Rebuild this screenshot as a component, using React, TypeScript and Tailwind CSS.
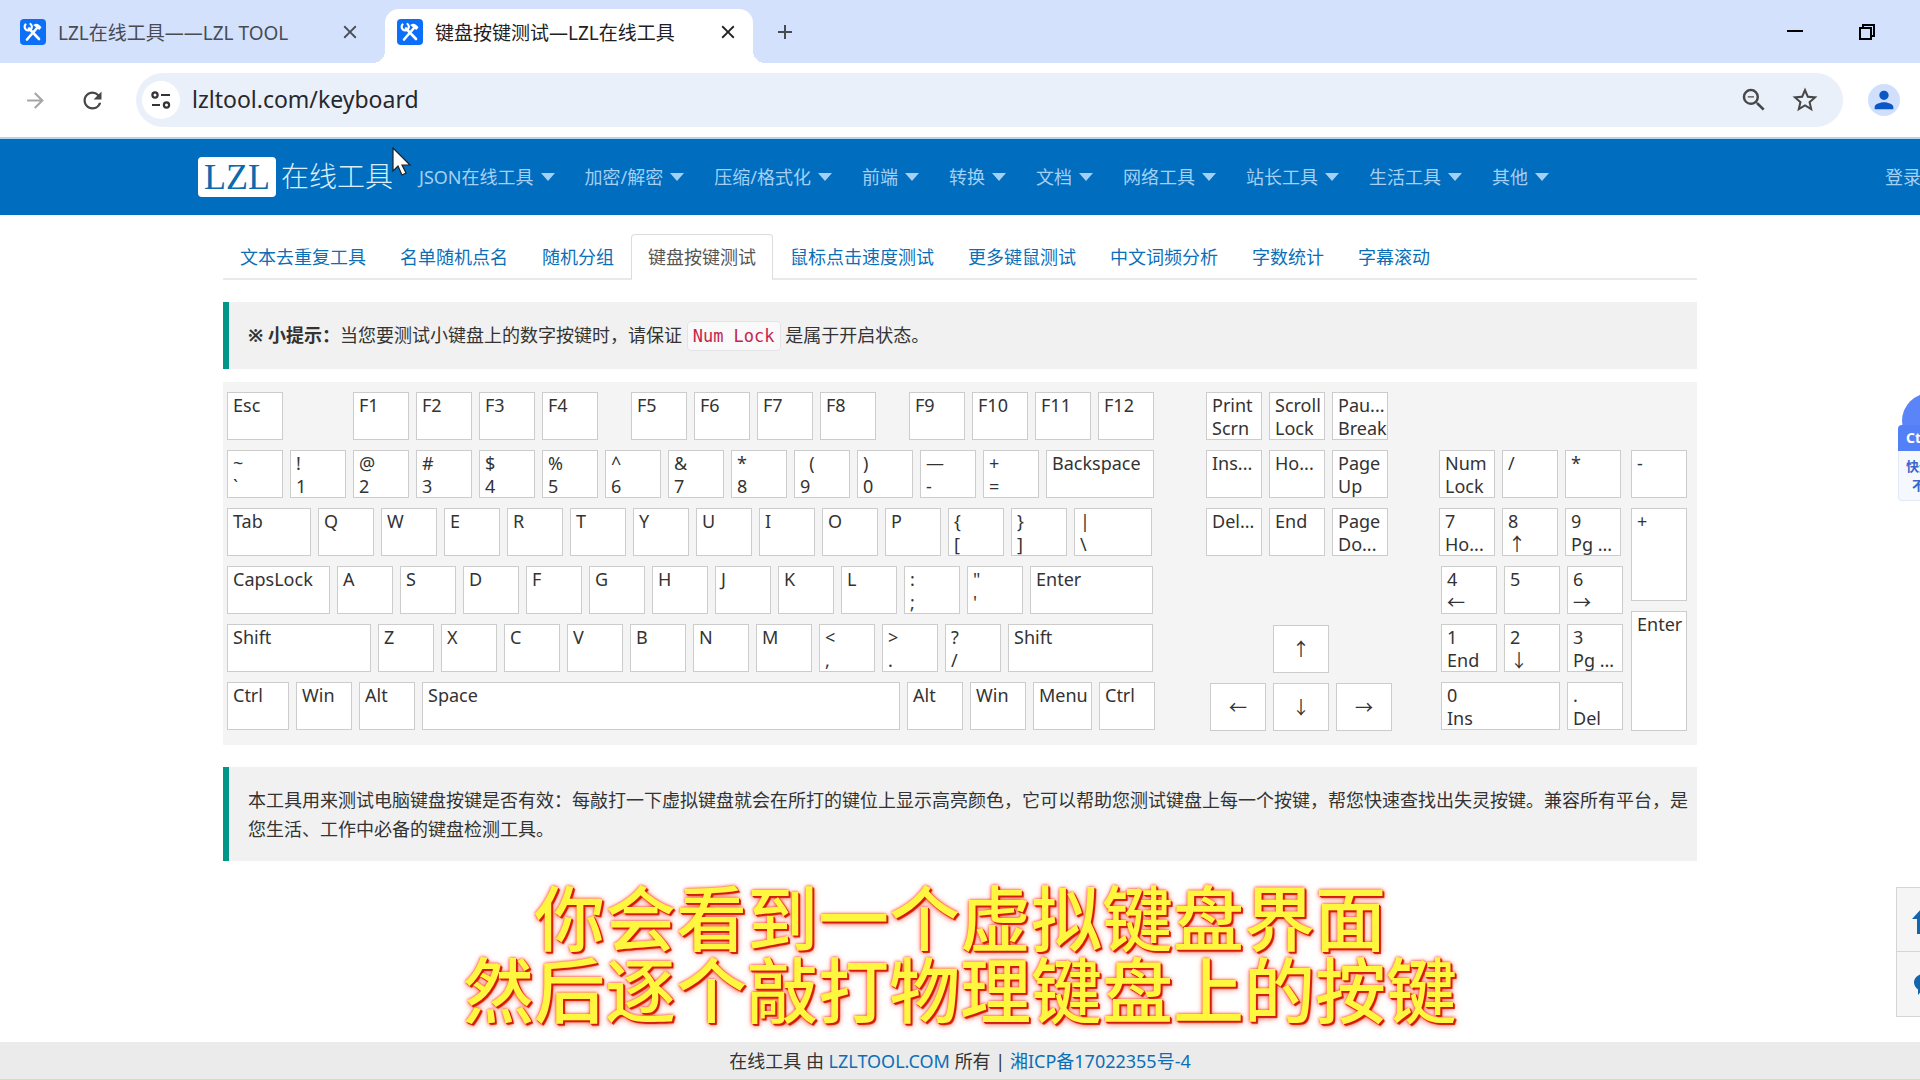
import type { ReactNode } from 'react';
import {
  MdAdd,
  MdArrowForward,
  MdClose,
  MdPerson,
  MdRefresh,
  MdStarOutline,
  MdZoomOut,
} from 'react-icons/md';

type KeyDef = [label: string, width?: string];

const menus = ['JSON在线工具', '加密/解密', '压缩/格式化', '前端', '转换', '文档', '网络工具', '站长工具', '生活工具', '其他'];

const tools = [
  '文本去重复工具',
  '名单随机点名',
  '随机分组',
  '键盘按键测试',
  '鼠标点击速度测试',
  '更多键鼠测试',
  '中文词频分析',
  '字数统计',
  '字幕滚动',
];

const functionKeys = [
  ['F1', 'F2', 'F3', 'F4'],
  ['F5', 'F6', 'F7', 'F8'],
  ['F9', 'F10', 'F11', 'F12'],
];

const mainRows: KeyDef[][] = [
  [
    ['~\n`'], ['!\n1'], ['@\n2'], ['#\n3'], ['$\n4'], ['%\n5'], ['^\n6'], ['&\n7'], ['*\n8'],
    ['  (\n9'], [')\n0'], ['—\n-'], ['+\n='], ['Backspace', 'w-[108px]'],
  ],
  [
    ['Tab', 'w-[84px]'], ['Q'], ['W'], ['E'], ['R'], ['T'], ['Y'], ['U'], ['I'], ['O'], ['P'],
    ['{\n['], ['}\n]'], ['|\n\\', 'w-[78px]'],
  ],
  [
    ['CapsLock', 'w-[103px]'], ['A'], ['S'], ['D'], ['F'], ['G'], ['H'], ['J'], ['K'], ['L'],
    [':\n;'], ['"\n\''], ['Enter', 'w-[123px]'],
  ],
  [
    ['Shift', 'w-36'], ['Z'], ['X'], ['C'], ['V'], ['B'], ['N'], ['M'],
    ['<\n,'], ['>\n.'], ['?\n/'], ['Shift', 'w-[145px]'],
  ],
  [
    ['Ctrl', 'w-[62px]'], ['Win'], ['Alt'], ['Space', 'w-[478px]'],
    ['Alt'], ['Win'], ['Menu', 'w-[59px]'], ['Ctrl'],
  ],
];

const navRows = [
  ['Print\nScrn', 'Scroll\nLock', 'Pau...\nBreak'],
  ['Ins...', 'Ho...', 'Page\nUp'],
  ['Del...', 'End', 'Page\nDo...'],
];

const padTop = [
  ['Num\nLock', '/', '*'],
  ['7\nHo...', '8\n↑', '9\nPg ...'],
];

const padMiddle = [
  ['4\n←', '5', '6\n→'],
  ['1\nEnd', '2\n↓', '3\nPg ...'],
];

function Key({ label, size = 'h-12 w-14', centered = false }: { label: string; size?: string; centered?: boolean }) {
  return (
    <button
      type="button"
      className={`flex shrink-0 overflow-hidden whitespace-pre border border-[#ccc] bg-white text-left text-lg leading-[23px] text-[#333] ${
        centered ? 'items-center justify-center' : 'items-start pl-[5px] pt-px'
      } ${size}`}
    >
      {label}
    </button>
  );
}

function Row({ children }: { children: ReactNode }) {
  return <div className="flex gap-[7px]">{children}</div>;
}

function KeyGrid({ rows }: { rows: string[][] }) {
  return (
    <div className="flex flex-col gap-[10px]">
      {rows.map((row, i) => (
        <Row key={i}>
          {row.map((label) => (
            <Key key={label} label={label} />
          ))}
        </Row>
      ))}
    </div>
  );
}

function Favicon() {
  return (
    <svg viewBox="0 0 26 26" className="size-[26px] shrink-0" fill="none">
      <rect width="26" height="26" rx="4" fill="#0b70f7" />
      <path d="M9 9.500l10 10.500" stroke="#fff" strokeWidth="2.600" strokeLinecap="round" />
      <path d="M5.500 5.500a3.600 3.600 0 1 0 5-.5" stroke="#fff" strokeWidth="2.200" strokeLinecap="round" />
      <path d="M7 20.500L17 9" stroke="#fff" strokeWidth="2.600" strokeLinecap="round" />
      <path d="M14 5.500c2.500-1.500 5-.5 7.500 3l-2.300 2.500-6-5z" fill="#fff" />
    </svg>
  );
}

function Browser() {
  return (
    <div>
      <div className="flex h-[63px] bg-[#d3e1fd] pt-[9px] text-[19px] text-[#474b52]">
        <div className="flex w-[385px] items-center pb-2 pl-5 pr-6">
          <Favicon />
          <span className="ml-3 flex-1 whitespace-nowrap pt-[3px]">LZL在线工具——LZL TOOL</span>
          <button type="button" aria-label="关闭">
            <MdClose className="size-[22px]" />
          </button>
        </div>
        <div className="relative flex w-[368px] items-center rounded-t-[14px] bg-white pb-2 pl-3 pr-[14px] text-[#1f2023]">
          <span className="absolute -left-3 bottom-0 size-3 bg-[radial-gradient(circle_at_0_0,transparent_12px,white_12px)]" />
          <span className="absolute -right-3 bottom-0 size-3 bg-[radial-gradient(circle_at_100%_0,transparent_12px,white_12px)]" />
          <Favicon />
          <span className="ml-3 flex-1 whitespace-nowrap pt-[3px]">键盘按键测试—LZL在线工具</span>
          <button type="button" aria-label="关闭">
            <MdClose className="size-[22px]" />
          </button>
        </div>
        <button type="button" aria-label="新标签页" className="ml-5 pb-2">
          <MdAdd className="size-6" />
        </button>
        <div className="ml-auto flex gap-14 pb-2 pr-[45px] text-black">
          <button type="button" aria-label="最小化">
            <svg viewBox="0 0 16 16" className="size-4">
              <path d="M0 7h16" stroke="currentColor" strokeWidth="2" />
            </svg>
          </button>
          <button type="button" aria-label="还原">
            <svg viewBox="0 0 16 16" className="size-4" fill="none" stroke="currentColor" strokeWidth="2">
              <path d="M1 4h11v11H1z" />
              <path d="M4 4V1h11v11h-3" />
            </svg>
          </button>
        </div>
      </div>

      <div className="flex h-[76px] items-center border-b-2 border-[#b4d5ee] bg-white text-[#474747]">
        <button type="button" aria-label="前进" className="ml-[23px] text-[#a5a5a5]">
          <MdArrowForward className="size-[25px]" />
        </button>
        <button type="button" aria-label="刷新" className="ml-[31px]">
          <MdRefresh className="size-[27px]" />
        </button>
        <div className="ml-[30px] flex h-[54px] flex-1 items-center rounded-full bg-[#eaf0f9] pl-[6px] pr-[23px]">
          <span className="flex size-[38px] items-center justify-center rounded-full bg-white">
            <svg viewBox="0 0 20 20" className="size-5" fill="none" stroke="#333" strokeWidth="2.2">
              <circle cx="4" cy="5" r="2.6" />
              <path d="M10 5h9M1 15h8" />
              <circle cx="15.5" cy="15" r="2.6" />
            </svg>
          </span>
          <input
            aria-label="地址栏"
            defaultValue="lzltool.com/keyboard"
            className="ml-3 min-w-0 flex-1 bg-transparent text-[23px] text-[#26282b] outline-none"
          />
          <button type="button" aria-label="缩小">
            <MdZoomOut className="size-[30px]" />
          </button>
          <button type="button" aria-label="收藏" className="ml-[21px]">
            <MdStarOutline className="size-[30px]" />
          </button>
        </div>
        <button
          type="button"
          aria-label="账户"
          className="ml-[25px] mr-5 flex size-8 items-center justify-center rounded-full bg-[#d0e0fc] text-[#0b57c6]"
        >
          <MdPerson className="size-[28px]" />
        </button>
      </div>
    </div>
  );
}

function SiteHeader() {
  return (
    <header className="flex h-[76px] items-center overflow-hidden bg-[#006dbf] pl-[198px] text-lg text-[#a3d0f4]">
      <a href="#" className="flex items-center">
        <span className="flex h-10 w-[78px] items-center justify-center rounded-sm bg-white font-['Liberation_Serif',serif] text-4xl text-[#0a6aae]">
          LZL
        </span>
        <span className="ml-[5px] text-[28px] font-light text-[#dcedfa]">在线工具</span>
      </a>
      <nav className="ml-[26px] flex gap-[30px]">
        {menus.map((menu) => (
          <a key={menu} href="#" className="flex items-center whitespace-nowrap">
            {menu}
            <svg viewBox="0 0 14 8" className="ml-[7px] h-2 w-[14px]">
              <path d="M0 0h14L7 8z" fill="currentColor" />
            </svg>
          </a>
        ))}
      </nav>
      <a href="#" className="ml-auto w-[35px] whitespace-nowrap">
        登录
      </a>
    </header>
  );
}

function Keyboard() {
  return (
    <section className="mt-[13px] flex bg-[#f4f4f4] px-1 pb-[14px] pt-[10px]">
      <div className="flex flex-col gap-[10px]">
        <div className="flex">
          <Key label="Esc" />
          <div className="ml-[70px] flex gap-[33px]">
            {functionKeys.map((group) => (
              <Row key={group[0]}>
                {group.map((label) => (
                  <Key key={label} label={label} />
                ))}
              </Row>
            ))}
          </div>
        </div>
        {mainRows.map((row, i) => (
          <Row key={i}>
            {row.map(([label, width = 'w-14'], j) => (
              <Key key={j} label={label} size={`h-12 ${width}`} />
            ))}
          </Row>
        ))}
      </div>

      <div className="ml-[51px] flex flex-col justify-between">
        <KeyGrid rows={navRows} />
        <div className="w-0 min-w-full pl-1">
          <div className="flex w-max flex-col items-center gap-[10px]">
            <Key label="↑" centered />
            <Row>
              <Key label="←" centered />
              <Key label="↓" centered />
              <Key label="→" centered />
            </Row>
          </div>
        </div>
      </div>

      <div className="ml-[51px] mt-[58px] flex flex-col gap-[10px]">
        <KeyGrid rows={padTop} />
        <div className="flex flex-col gap-[10px] pl-0.5">
          <KeyGrid rows={padMiddle} />
          <Row>
            <Key label={'0\nIns'} size="h-12 w-[119px]" />
            <Key label={'.\nDel'} />
          </Row>
        </div>
      </div>
      <div className="ml-2 mt-[58px] flex flex-col gap-[10px]">
        <Key label="-" />
        <Key label="+" size="h-[93px] w-14" />
        <Key label="Enter" size="h-[120px] w-14" />
      </div>
    </section>
  );
}

function SideWidgets() {
  return (
    <>
      <aside className="absolute right-0 top-[393px] flex w-[22px] flex-col overflow-hidden text-sm font-bold">
        <div className="flex h-8 pl-1">
          <span className="size-14 shrink-0 rounded-full bg-[#5b84f8]" />
        </div>
        <div className="relative flex h-[26px] items-center rounded-tl-sm bg-[#5480f7] pl-2 text-white">Ct</div>
        <div className="h-[50px] rounded-bl border-b border-l border-[#e3e9f5] bg-[#f5f8fe] pl-[7px] pt-[6px] text-[13px] leading-[19px] text-[#3a66cf]">
          <p className="whitespace-nowrap">快速</p>
          <p className="pl-[6px]">不</p>
        </div>
      </aside>
      <aside className="absolute bottom-[63px] right-0 w-6 divide-y divide-[#d5d5d5] overflow-hidden border-y border-l border-[#d5d5d5] bg-[#f5f5f5] text-[#1565ae]">
        <button type="button" aria-label="返回顶部" className="flex h-16 w-full items-center pl-[15px]">
          <svg viewBox="0 0 24 28" className="h-7 w-6 shrink-0" fill="currentColor">
            <path d="M12 0l12 13h-5v15H5V13H0z" />
          </svg>
        </button>
        <button type="button" aria-label="反馈" className="flex h-16 w-full items-center pl-[17px]">
          <svg viewBox="0 0 26 22" className="h-[22px] w-[26px] shrink-0" fill="currentColor">
            <path d="M13 0c7 0 13 4 13 9.500S20 19 13 19c-2 0-4-.3-5.500-1L4 22v-5.500C1.500 14.500 0 12 0 9.500 0 4 6 0 13 0z" />
          </svg>
        </button>
      </aside>
    </>
  );
}

export default function App() {
  return (
    <div className="relative flex min-h-screen flex-col overflow-hidden bg-white font-['Noto_Sans','Noto_Sans_CJK_SC',sans-serif] text-lg text-[#333]">
      <Browser />
      <SiteHeader />

      <main className="mx-auto w-full max-w-[1474px]">
        <nav className="mt-[19px] flex border-b-2 border-[#e9e9e9]">
          {tools.map((tool) => (
            <a
              key={tool}
              href="#"
              className={`-mb-0.5 whitespace-nowrap rounded-t border px-4 py-2 leading-7 ${
                tool === '键盘按键测试'
                  ? 'border-[#dcdcdc] border-b-white bg-white text-[#555]'
                  : 'border-transparent text-[#0b6fb8]'
              }`}
            >
              {tool}
            </a>
          ))}
        </nav>

        <p className="mt-[22px] flex h-[67px] items-center border-l-[6px] border-[#009688] bg-[#f1f1f1] pl-[19px]">
          <span>
            <b>※ 小提示：</b>当您要测试小键盘上的数字按键时，请保证{' '}
            <code className="rounded border border-[#e4e4e8] bg-[#f9f9fa] px-[5px] py-1 font-['DejaVu_Sans_Mono',monospace] text-[17px] text-[#c7254e]">
              Num Lock
            </code>{' '}
            是属于开启状态。
          </span>
        </p>

        <Keyboard />

        <p className="mt-[22px] border-l-[6px] border-[#009688] bg-[#f1f1f1] pb-[17px] pl-[19px] pr-1 pt-[19px] leading-[29px]">
          本工具用来测试电脑键盘按键是否有效：每敲打一下虚拟键盘就会在所打的键位上显示高亮颜色，它可以帮助您测试键盘上每一个按键，帮您快速查找出失灵按键。兼容所有平台，是您生活、工作中必备的键盘检测工具。
        </p>
      </main>

      <footer className="mt-auto flex h-[38px] items-center justify-center border-b border-[#bdecb9] bg-[#ebebeb]">
        <p>
          在线工具 由{' '}
          <a href="#" className="text-[#0b6fb8]">
            LZLTOOL.COM
          </a>{' '}
          所有 |{' '}
          <a href="#" className="text-[#0b6fb8]">
            湘ICP备17022355号-4
          </a>
        </p>
      </footer>

      <SideWidgets />

      <div className="absolute inset-x-0 bottom-[54px] text-center text-[71px] font-medium leading-[72px] text-[#fff640] [text-shadow:1px_1px_0_#cf1c00,2px_2px_1px_#d61a00,0_0_3px_#ff2a1a,1px_2px_6px_#ff5a4a]">
        <p>你会看到一个虚拟键盘界面</p>
        <p>然后逐个敲打物理键盘上的按键</p>
      </div>

      <svg viewBox="0 0 20 30" className="absolute left-[392px] top-[147px] h-[30px] w-5">
        <path d="M1 1v23l5-5 4 9 4-2-4-8h8z" fill="#fff" stroke="#222" strokeWidth="1.200" />
      </svg>
    </div>
  );
}
